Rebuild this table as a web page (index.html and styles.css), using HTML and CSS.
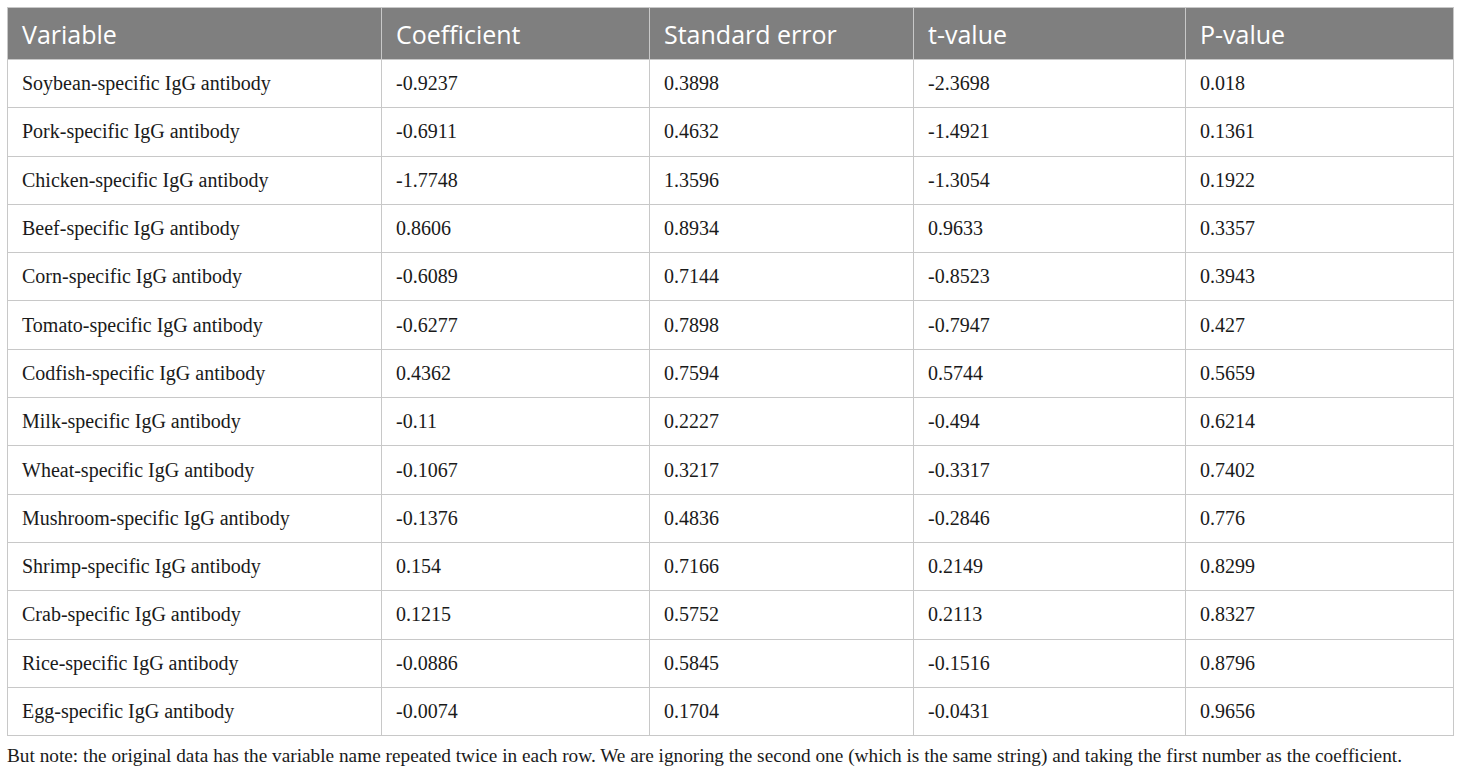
FILE: index.html
```html
<!DOCTYPE html>
<html>
<head>
<meta charset="utf-8">
<link rel="stylesheet" href="styles.css">
</head>
<body>
<table class="data">
<colgroup><col class="c1"><col class="c2"><col class="c3"><col class="c4"><col class="c5"></colgroup>
<thead>
<tr><th>Variable</th><th>Coefficient</th><th>Standard error</th><th>t-value</th><th>P-value</th></tr>
</thead>
<tbody>
<tr><td>Soybean-specific IgG antibody</td><td>-0.9237</td><td>0.3898</td><td>-2.3698</td><td>0.018</td></tr>
<tr><td>Pork-specific IgG antibody</td><td>-0.6911</td><td>0.4632</td><td>-1.4921</td><td>0.1361</td></tr>
<tr><td>Chicken-specific IgG antibody</td><td>-1.7748</td><td>1.3596</td><td>-1.3054</td><td>0.1922</td></tr>
<tr><td>Beef-specific IgG antibody</td><td>0.8606</td><td>0.8934</td><td>0.9633</td><td>0.3357</td></tr>
<tr><td>Corn-specific IgG antibody</td><td>-0.6089</td><td>0.7144</td><td>-0.8523</td><td>0.3943</td></tr>
<tr><td>Tomato-specific IgG antibody</td><td>-0.6277</td><td>0.7898</td><td>-0.7947</td><td>0.427</td></tr>
<tr><td>Codfish-specific IgG antibody</td><td>0.4362</td><td>0.7594</td><td>0.5744</td><td>0.5659</td></tr>
<tr><td>Milk-specific IgG antibody</td><td>-0.11</td><td>0.2227</td><td>-0.494</td><td>0.6214</td></tr>
<tr><td>Wheat-specific IgG antibody</td><td>-0.1067</td><td>0.3217</td><td>-0.3317</td><td>0.7402</td></tr>
<tr><td>Mushroom-specific IgG antibody</td><td>-0.1376</td><td>0.4836</td><td>-0.2846</td><td>0.776</td></tr>
<tr><td>Shrimp-specific IgG antibody</td><td>0.154</td><td>0.7166</td><td>0.2149</td><td>0.8299</td></tr>
<tr><td>Crab-specific IgG antibody</td><td>0.1215</td><td>0.5752</td><td>0.2113</td><td>0.8327</td></tr>
<tr><td>Rice-specific IgG antibody</td><td>-0.0886</td><td>0.5845</td><td>-0.1516</td><td>0.8796</td></tr>
<tr><td>Egg-specific IgG antibody</td><td>-0.0074</td><td>0.1704</td><td>-0.0431</td><td>0.9656</td></tr>
</tbody>
</table>
<p class="note">But note: the original data has the variable name repeated twice in each row. We are ignoring the second one (which is the same string) and taking the first number as the coefficient.</p>
</body>
</html>
```
FILE: styles.css
```css
html, body { margin: 0; padding: 0; background: #fff; }
body { padding: 7px 8px 0 7px; font-family: "Liberation Serif", "Times New Roman", serif; color: #222; }
.data { width: 1446px; border-collapse: collapse; table-layout: fixed; }
.c1 { width: 374px; } .c2 { width: 268px; } .c3 { width: 264px; } .c4 { width: 272px; } .c5 { width: 268px; }
.data th { background: #7f7f7f; color: #fff; font-family: "Open Sans", sans-serif; font-weight: 400; font-size: 25px; text-align: left; height: 52px; padding: 0 14px; border: 1px solid #c8c8c8; box-sizing: border-box; }
.data td { font-size: 20px; height: 48.3px; padding: 0 14px; border: 1px solid #c8c8c8; box-sizing: border-box; color: #1a1a1a; }
.note { margin: 9px 0 0 0; font-size: 19.3px; color: #1a1a1a; }
```
